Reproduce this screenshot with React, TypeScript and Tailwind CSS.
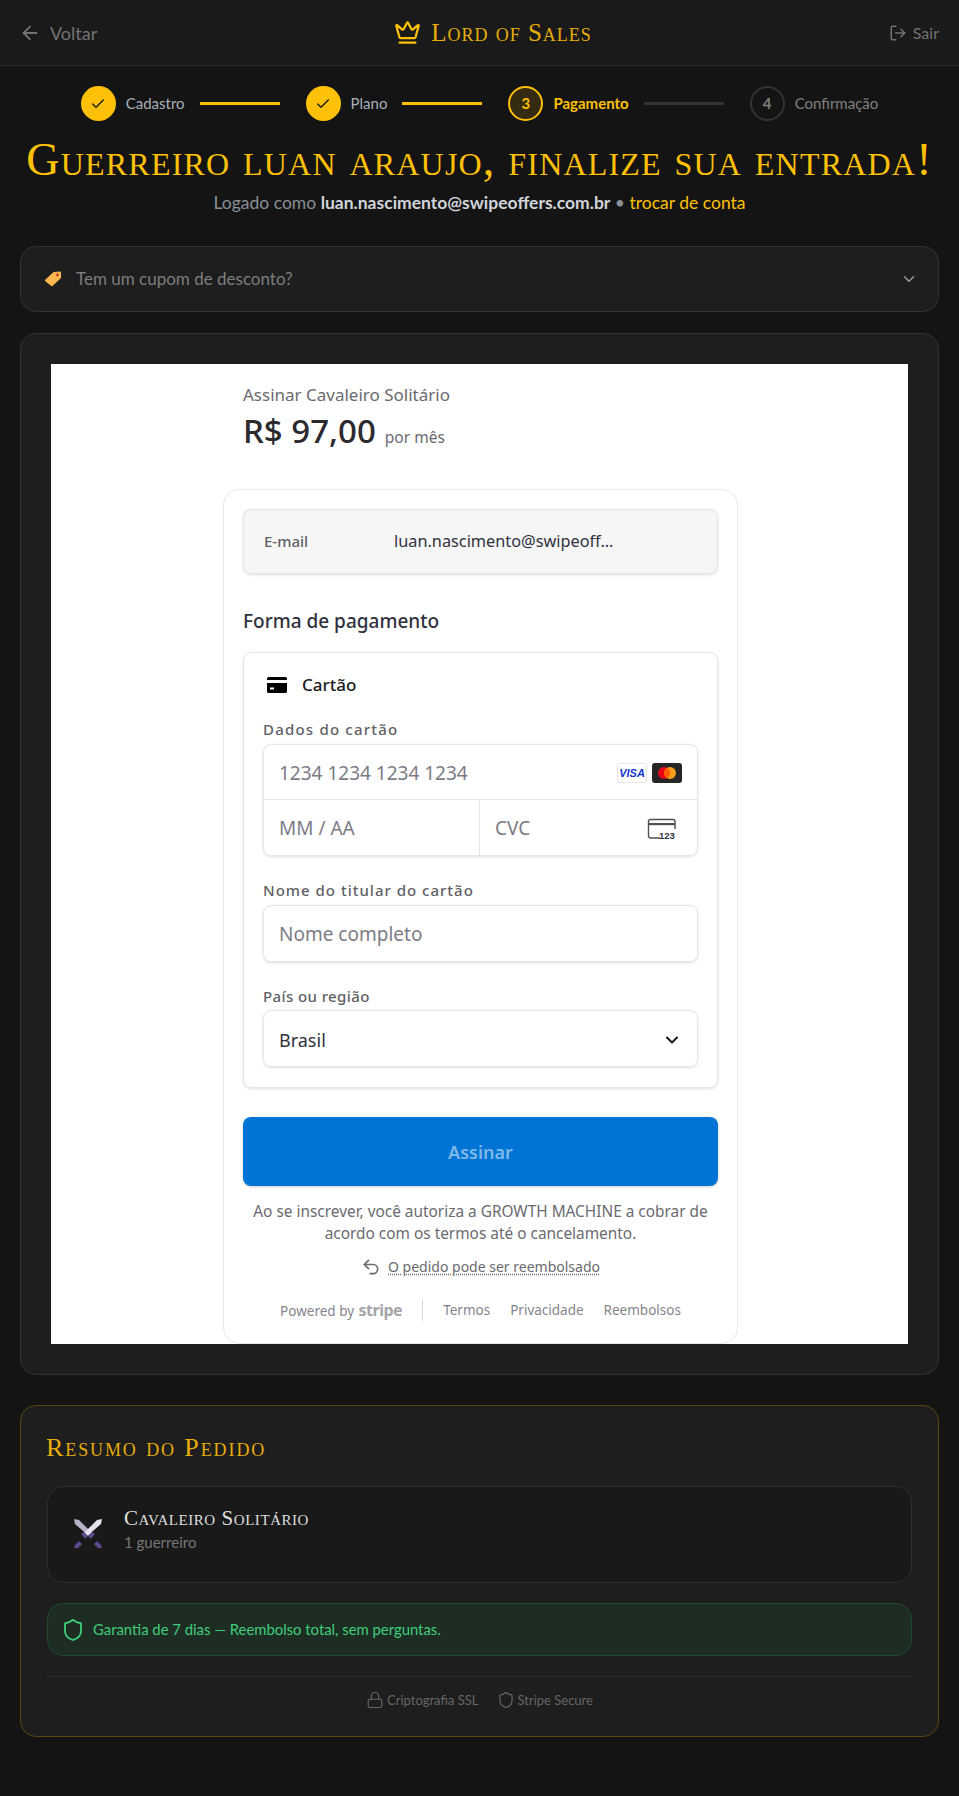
import { ArrowLeft, Check, ChevronDown, Crown, Lock, LogOut, Shield, Undo2 } from "lucide-react";

const heading = "[font-family:'Liberation_Serif',serif] [font-variant-caps:small-caps]";

function Step({ n, label, state, line }: { n: number; label: string; state: "done" | "active" | "todo"; line?: boolean }) {
  return (
    <div className="flex items-center">
      {state === "done" && (
        <div className="flex h-[35px] w-[35px] items-center justify-center rounded-full bg-[#ffc107] text-[#1a1a1a]">
          <Check size={16} strokeWidth={2} />
        </div>
      )}
      {state === "active" && (
        <div className="flex h-[35px] w-[35px] items-center justify-center rounded-full border-2 border-[#ffc107] bg-[#342b12] text-[15px] font-bold text-[#ffc107]">{n}</div>
      )}
      {state === "todo" && (
        <div className="flex h-[35px] w-[35px] items-center justify-center rounded-full border-2 border-[#333333] text-[15px] font-bold text-[#808080]">{n}</div>
      )}
      <span className={`ml-[10px] text-[15px] ${state === "active" ? "font-bold text-[#ffc107]" : state === "done" ? "text-[#a8b0ba]" : "text-[#808080]"}`}>{label}</span>
      {line && <div className={`ml-[15px] mr-[26px] h-[3px] w-[80px] ${state === "todo" || state === "active" ? "bg-[#333333]" : "bg-[#ffc107]"}`} />}
    </div>
  );
}

function TagIcon() {
  return (
    <svg width="18" height="16" viewBox="0 0 18 16">
      <path d="M1 9.5 9.5 1.5 16.5 1 16.5 7 8 15Z" fill="#fdb84d" stroke="#fdb84d" strokeLinejoin="round" />
      <circle cx="13.5" cy="4" r="1.4" fill="#c0392b" />
    </svg>
  );
}

function Swords() {
  return (
    <svg width="32" height="32" viewBox="0 0 32 32">
      <path d="M2 2 7 3 21 17 18 20 3 7Z" fill="#b9b1c9" />
      <path d="M30 2 25 3 11 17 14 20 29 7Z" fill="#e6e2ee" />
      <path d="M9 17 12 15 19 22 16 25Z M23 17 20 15 13 22 16 25Z" fill="#5e4a8c" />
      <path d="M2 31 3 28 7 24 10 27 6 31Z M30 31 29 28 25 24 22 27 26 31Z" fill="#5e4a8c" />
    </svg>
  );
}

function Visa() {
  return (
    <div className="flex h-[20px] w-[30px] items-center justify-center rounded-[2px] border border-[#e6e6e6] bg-white text-[11px] font-bold italic text-[#1434cb] [font-family:'Liberation_Sans',sans-serif]">VISA</div>
  );
}

function Master() {
  return (
    <svg width="30" height="20" viewBox="0 0 30 20">
      <rect width="30" height="20" rx="3" fill="#252525" />
      <circle cx="12" cy="10" r="6" fill="#eb001b" />
      <circle cx="18" cy="10" r="6" fill="#f79e1b" />
      <path d="M15 4.8a6 6 0 0 1 0 10.4a6 6 0 0 1 0-10.4Z" fill="#ff5f00" />
    </svg>
  );
}

function Cvc() {
  return (
    <svg width="30" height="22" viewBox="0 0 30 22">
      <path d="M13 20H3.5A2 2 0 0 1 1.5 18V3.5A2 2 0 0 1 3.5 1.5H26A2 2 0 0 1 28 3.5V11" fill="none" stroke="#4f4f55" strokeWidth="1.4" />
      <rect x="1.5" y="5" width="26.5" height="2.2" fill="#4f4f55" />
      <text x="12" y="20.5" fontSize="9.5" fontWeight="700" fill="#30313d" fontFamily="'Liberation Sans', sans-serif">123</text>
    </svg>
  );
}

function CardGlyph() {
  return (
    <svg width="20" height="16" viewBox="0 0 20 16">
      <path d="M0 1.5A1.5 1.5 0 0 1 1.5 0h17A1.5 1.5 0 0 1 20 1.5V3H0Z M0 6h20v8.5a1.5 1.5 0 0 1-1.5 1.5h-17A1.5 1.5 0 0 1 0 14.5Z" fill="#000" />
      <rect x="3" y="10.5" width="4" height="2" fill="#fff" />
    </svg>
  );
}

const fieldShadow = "shadow-[0_1px_3px_rgba(0,0,0,0.12)]";
const label = "text-[15px] font-medium leading-5 text-[#5f5f66]";

export default function App() {
  return (
    <div className="min-h-[1796px] bg-[#141414] [font-family:Lato,sans-serif]">
      <header className="flex h-[66px] items-center justify-between border-b border-[#2a2a2a] bg-[#1a1a1a] px-5">
        <div className="flex items-center gap-[9px] text-lg text-[#737373]">
          <ArrowLeft size={22} className="-ml-[1px]" />
          <span>Voltar</span>
        </div>
        <div className="flex items-center gap-[10px] text-[#ffc107]">
          <Crown size={27} strokeWidth={2} />
          <span className={`${heading} text-[25px] leading-8 tracking-[1px] text-[#e6ad0b]`}>Lord of Sales</span>
        </div>
        <div className="flex items-center gap-[6px] text-base text-[#737373]">
          <LogOut size={18} />
          <span>Sair</span>
        </div>
      </header>

      <div className="mt-5 flex justify-center">
        <Step n={1} label="Cadastro" state="done" line />
        <Step n={2} label="Plano" state="done" line />
        <Step n={3} label="Pagamento" state="active" line />
        <Step n={4} label="Confirmação" state="todo" />
      </div>

      <h1 className={`${heading} mt-[13px] text-center text-[46px] leading-[52px] tracking-[1.2px] text-[#ffc107] whitespace-nowrap`}>Guerreiro luan araujo, finalize sua entrada!</h1>
      <p className="mt-[4px] text-center text-[17.5px] leading-[26px] text-[#8a8f96]">
        Logado como <strong className="font-bold text-[#d1d5db]">luan.nascimento@swipeoffers.com.br</strong> • <span className="text-[#ffc107]">trocar de conta</span>
      </p>

      <div className="mx-5 mt-[30px] flex h-[66px] items-center justify-between rounded-2xl border border-[#333333] bg-[#1e1e1e] pl-[23px] pr-5">
        <div className="flex items-center gap-[14px] text-[17px] text-[#7d7d7d]">
          <TagIcon />
          <span>Tem um cupom de desconto?</span>
        </div>
        <ChevronDown size={18} className="text-[#9a9a9a]" />
      </div>

      <div className="mx-5 mt-[21px] rounded-2xl border border-[#333333] bg-[#1e1e1e] px-[30px] py-[30px]">
        <div className="h-[980px] overflow-hidden bg-white [font-family:'Noto_Sans',sans-serif]">
          <div className="pl-[192px] pt-[20px]">
            <div className="text-[17px] leading-[22px] text-[#6a6a6f]">Assinar Cavaleiro Solitário</div>
            <div className="mt-[3px] flex items-baseline gap-[9px]">
              <span className="text-[33px] font-medium leading-[44px] text-[#2b2b2f]">R$ 97,00</span>
              <span className="text-[15.5px] text-[#6a6a6f]">por mês</span>
            </div>
          </div>

          <div className="ml-[172px] mt-[36px] h-[855px] w-[515px] rounded-2xl border border-[#e8e8e8] px-[19px] pt-[19px]">
            <div className={`flex h-[65px] items-center rounded-lg border border-[#e6e6e6] bg-[#f6f6f6] pl-5 ${fieldShadow}`}>
              <span className="w-[130px] text-[15px] font-medium text-[#5f5f66]">E-mail</span>
              <span className="text-[16.3px] text-[#30313d]">luan.nascimento@swipeoff...</span>
            </div>
            <div className="mt-[34px] text-[19px] font-medium leading-[27px] text-[#30313d]">Forma de pagamento</div>

            <div className={`mt-[17px] h-[436px] rounded-lg border border-[#e6e6e6] px-[19px] ${fieldShadow}`}>
              <div className="flex h-[63px] items-center gap-[15px] pl-1 text-[17px] font-medium text-[#1a1a1a]">
                <CardGlyph />
                <span>Cartão</span>
              </div>
              <div className={`mt-[3px] tracking-[1.2px] ${label}`}>Dados do cartão</div>
              <div className={`mt-[5px] rounded-lg border border-[#e6e6e6] ${fieldShadow}`}>
                <div className="flex h-[55px] items-center justify-between border-b border-[#e6e6e6] px-[15px] pt-[2px] text-[19px] text-[#7c7c85]">
                  <span>1234 1234 1234 1234</span>
                  <div className="flex items-center gap-[5px]"><Visa /><Master /></div>
                </div>
                <div className="flex h-[55px] text-[19px] text-[#7c7c85]">
                  <div className="flex w-[216px] items-center border-r border-[#e6e6e6] px-[15px] pt-[2px]">MM / AA</div>
                  <div className="flex flex-1 items-center justify-between pl-[15px] pr-[20px] pt-[2px]">
                    <span>CVC</span>
                    <Cvc />
                  </div>
                </div>
              </div>
              <div className={`mt-[24px] tracking-[1px] ${label}`}>Nome do titular do cartão</div>
              <div className={`mt-[5px] flex h-[57px] items-center rounded-lg border border-[#e6e6e6] px-[15px] pt-[2px] text-[19px] text-[#7c7c85] ${fieldShadow}`}>Nome completo</div>
              <div className={`mt-[24px] tracking-[0.4px] ${label}`}>País ou região</div>
              <div className={`mt-[4px] flex h-[57px] items-center justify-between rounded-lg border border-[#e6e6e6] px-[15px] pt-[2px] text-lg text-[#30313d] ${fieldShadow}`}>
                <span>Brasil</span>
                <ChevronDown size={20} className="text-[#1a1a1a]" strokeWidth={2.4} />
              </div>
            </div>

            <div className="mt-[29px] flex h-[69px] items-center justify-center rounded-lg bg-[#0074d4] text-lg font-semibold text-[#7fb9ea] shadow-[0_1px_3px_rgba(0,0,0,0.2)]">Assinar</div>
            <p className="mt-[15px] text-center text-[15.4px] leading-[22px] text-[#6a6a6f]">Ao se inscrever, você autoriza a GROWTH MACHINE a cobrar de<br />acordo com os termos até o cancelamento.</p>
            <div className="mt-[12px] flex items-center justify-center gap-[7px] text-sm leading-5 text-[#6a6a6f]">
              <Undo2 size={20} />
              <span className="underline decoration-dotted underline-offset-2">O pedido pode ser reembolsado</span>
            </div>
            <div className="mt-[21px] flex items-center justify-center text-[13.5px] text-[#85858d]">
              <span>Powered by <strong className="ml-[1px] text-[16px] font-bold tracking-[-0.5px] text-[#a5a5ab]">stripe</strong></span>
              <div className="ml-5 mr-5 h-[21px] w-px bg-[#d8d8d8]" />
              <span>Termos</span>
              <span className="ml-5">Privacidade</span>
              <span className="ml-5">Reembolsos</span>
            </div>
          </div>
        </div>
      </div>

      <div className="mx-5 mt-[30px] rounded-2xl border border-[#5c4712] bg-[#1e1e1e] px-[26px] pb-[27px] pt-[26px]">
        <h2 className={`${heading} -ml-[1px] text-[26px] leading-8 tracking-[1.9px] text-[#e6ad0b]`}>Resumo do Pedido</h2>
        <div className="mt-[22px] flex h-[97px] items-start gap-[20px] rounded-2xl border border-[#2e2e2e] bg-[#191919] pl-[24px] pt-[19px]">
          <div className="pt-[11px]"><Swords /></div>
          <div>
            <div className={`${heading} text-[21px] leading-6 tracking-[0.55px] text-[#dedede]`}>Cavaleiro Solitário</div>
            <div className="pt-[2px] text-[15px] leading-5 text-[#777777]">1 guerreiro</div>
          </div>
        </div>
        <div className="mt-[20px] flex h-[53px] items-center gap-[8px] rounded-2xl border border-[#1f4a30] bg-[#1e2d24] pl-[13px] text-[14.85px] text-[#3ecf78]">
          <Shield size={24} strokeWidth={1.8} />
          <span>Garantia de 7 dias — Reembolso total, sem perguntas.</span>
        </div>
        <div className="mt-[20px] flex items-center justify-center gap-[18px] border-t border-[#2a2a2a] pt-[14px] text-[13px] leading-[18px] text-[#666666]">
          <div className="flex items-center gap-[3px]"><Lock size={18} strokeWidth={1.6} /><span>Criptografia SSL</span></div>
          <div className="flex items-center gap-[3px]"><Shield size={18} strokeWidth={1.6} /><span>Stripe Secure</span></div>
        </div>
      </div>
    </div>
  );
}
